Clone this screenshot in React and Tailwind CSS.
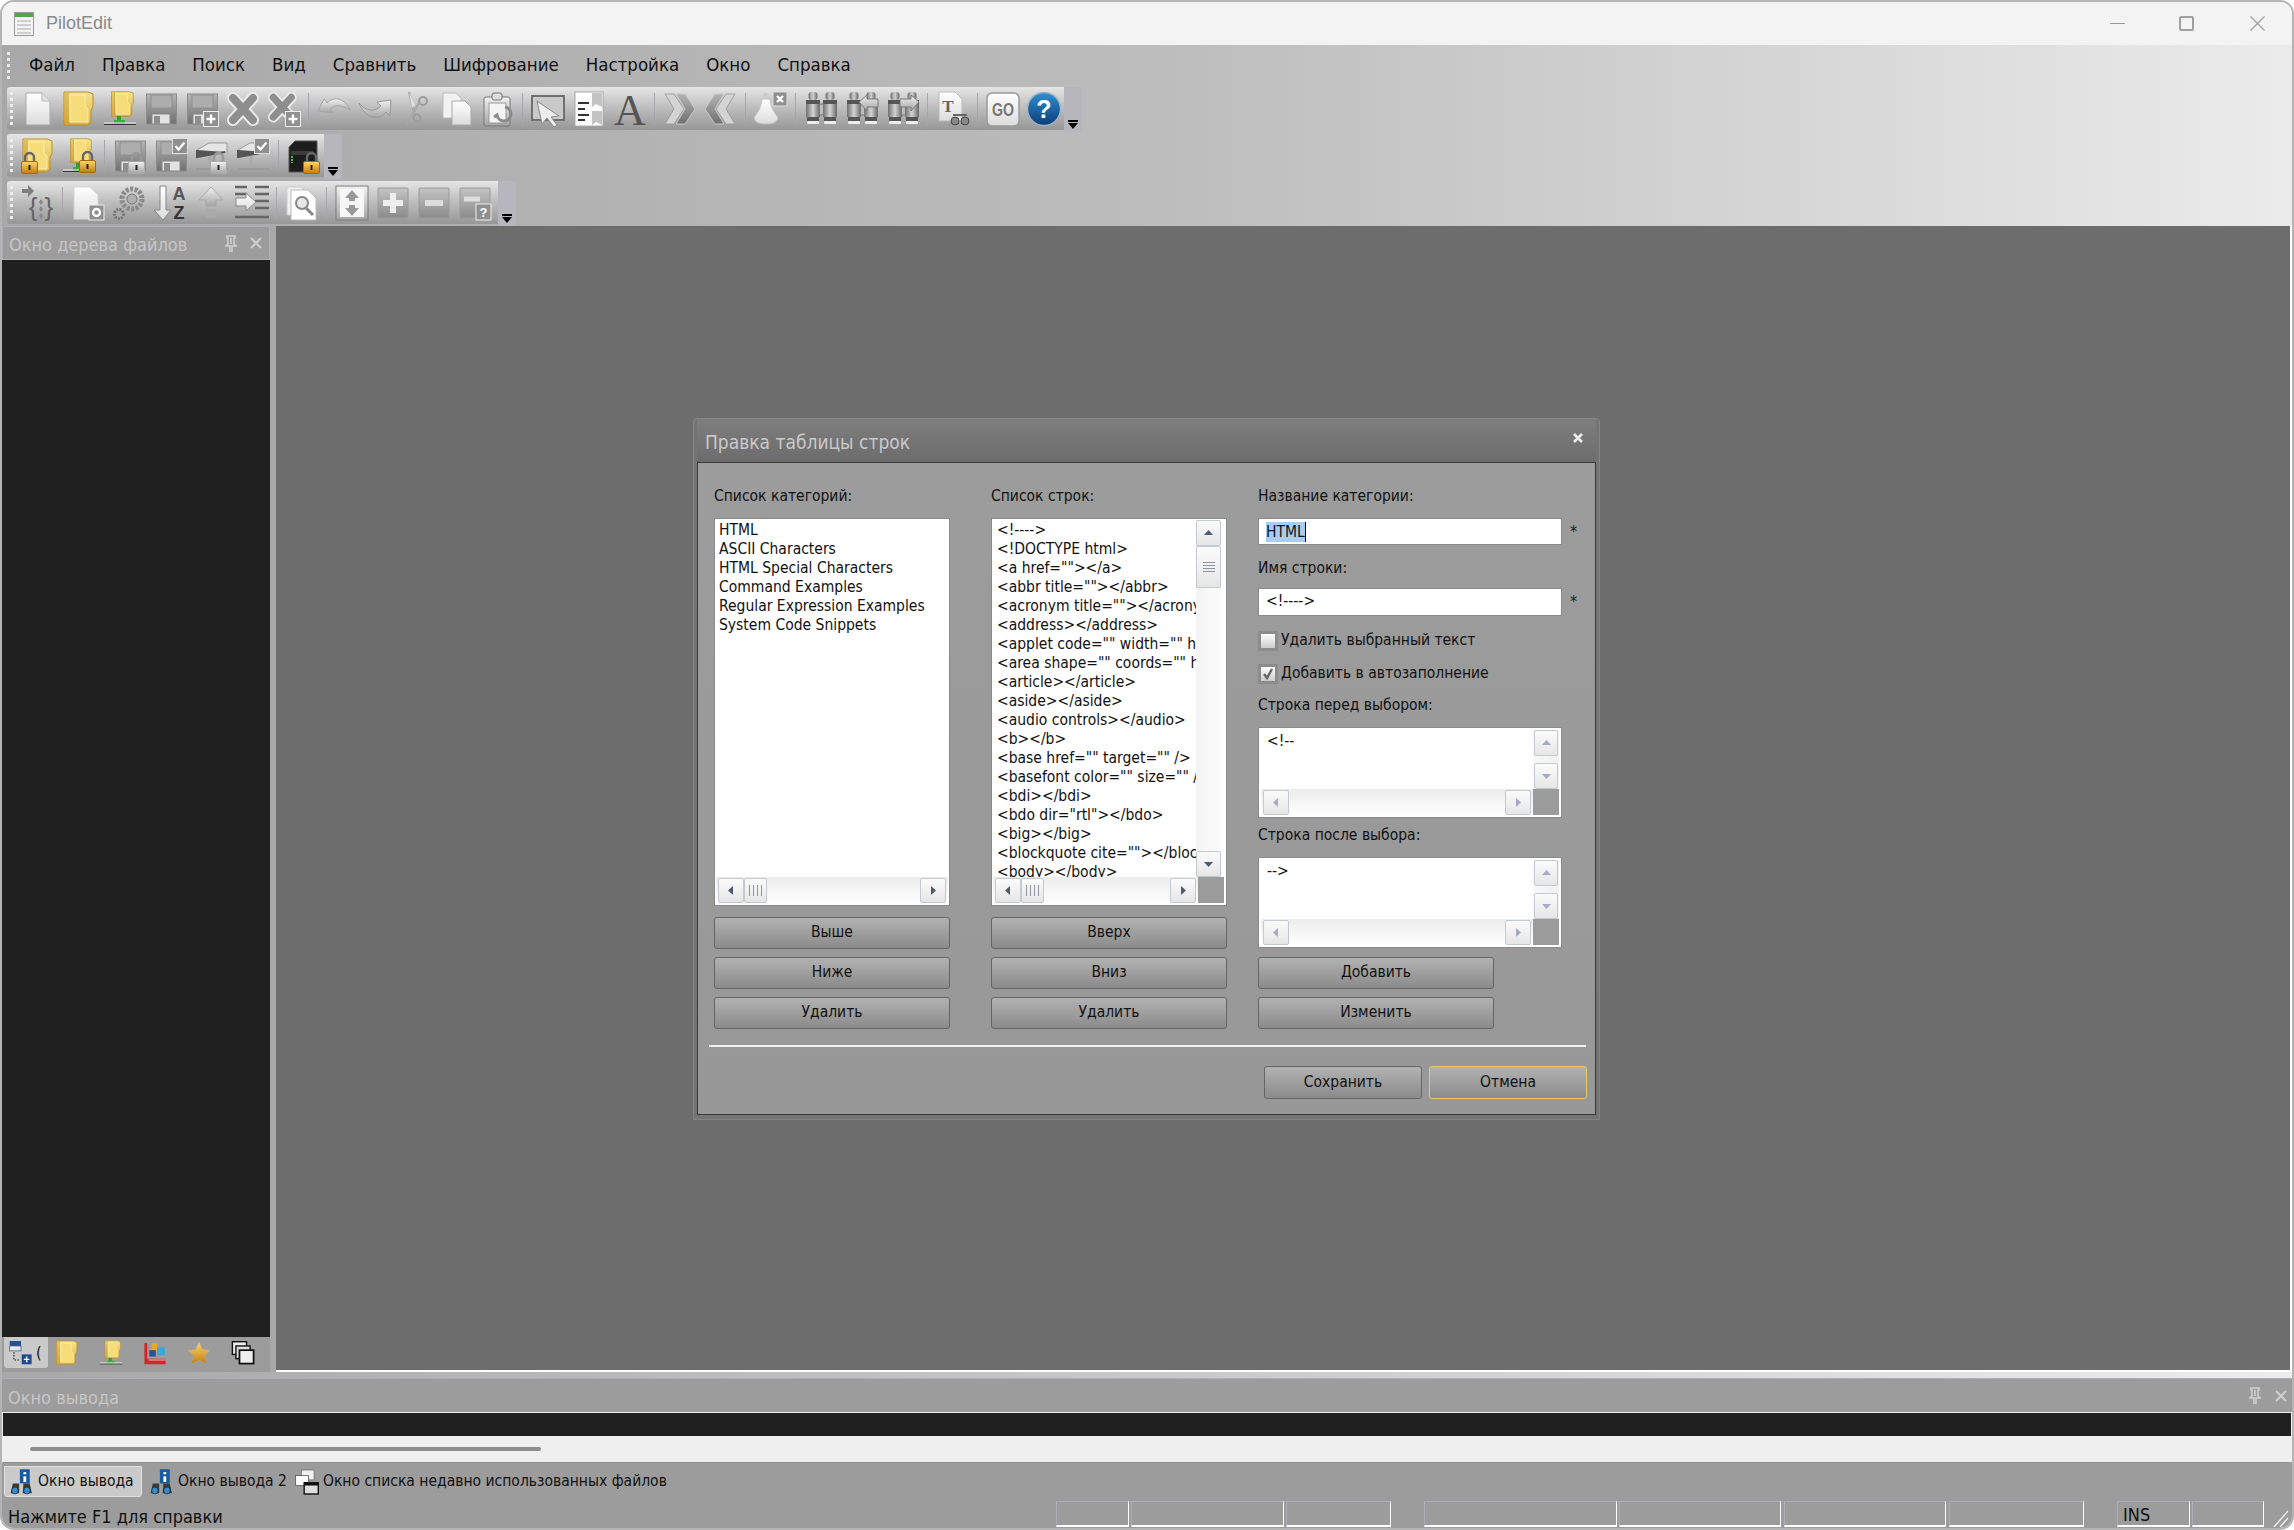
import React from 'react';

const categories = ['HTML', 'ASCII Characters', 'HTML Special Characters', 'Command Examples', 'Regular Expression Examples', 'System Code Snippets'];

const strings = [
  '<!---->', '<!DOCTYPE html>', '<a href=""></a>', '<abbr title=""></abbr>', '<acronym title=""></acronym>',
  '<address></address>', '<applet code="" width="" height=""></applet>', '<area shape="" coords="" href="" />',
  '<article></article>', '<aside></aside>', '<audio controls></audio>', '<b></b>', '<base href="" target="" />',
  '<basefont color="" size="" />', '<bdi></bdi>', '<bdo dir="rtl"></bdo>', '<big></big>',
  '<blockquote cite=""></blockquote>', '<body></body>',
];

const menu = ['Файл', 'Правка', 'Поиск', 'Вид', 'Сравнить', 'Шифрование', 'Настройка', 'Окно', 'Справка'];

// --- icons ---
const Icon = ({ children, w = 34, h = 36 }) => (
  <svg width={w} height={h} viewBox="0 0 34 36" className="block shrink-0">{children}</svg>
);

const Defs = () => (
  <svg width="0" height="0" className="block h-0 w-0">
    <defs>
      <linearGradient id="gPage" x1="0" y1="0" x2="0" y2="1"><stop offset="0" stopColor="#fff" /><stop offset="1" stopColor="#dcdcdc" /></linearGradient>
      <linearGradient id="gFold" x1="0" y1="0" x2="0" y2="1"><stop offset="0" stopColor="#f8e48e" /><stop offset="1" stopColor="#dcb044" /></linearGradient>
      <linearGradient id="gDark" x1="0" y1="0" x2="0" y2="1"><stop offset="0" stopColor="#b4b4b4" /><stop offset="1" stopColor="#707070" /></linearGradient>
      <linearGradient id="gMid" x1="0" y1="0" x2="0" y2="1"><stop offset="0" stopColor="#c4c4c4" /><stop offset="1" stopColor="#8a8a8a" /></linearGradient>
      <linearGradient id="gSilver" x1="0" y1="0" x2="0" y2="1"><stop offset="0" stopColor="#f2f2f2" /><stop offset="1" stopColor="#a4a4a4" /></linearGradient>
      <linearGradient id="gGold" x1="0" y1="0" x2="0" y2="1"><stop offset="0" stopColor="#ffd768" /><stop offset="1" stopColor="#c27c12" /></linearGradient>
      <linearGradient id="gBlue" x1="0" y1="0" x2="0" y2="1"><stop offset="0" stopColor="#2f8fd2" /><stop offset="1" stopColor="#0a3d78" /></linearGradient>
      <linearGradient id="gCyl" x1="0" y1="0" x2="1" y2="0"><stop offset="0" stopColor="#6e6e6e" /><stop offset="0.5" stopColor="#d4d4d4" /><stop offset="1" stopColor="#666" /></linearGradient>
    </defs>
  </svg>
);

const Plus = ({ x = 18, y = 20 }) => (
  <g transform={`translate(${x} ${y})`}>
    <rect x="0.5" y="0.5" width="15" height="15" fill="#8f8f8f" stroke="#eee" />
    <path d="M8 3.5v9M3.5 8h9" stroke="#fff" strokeWidth="2.4" />
  </g>
);

const Check = ({ x = 18, y = 0 }) => (
  <g transform={`translate(${x} ${y})`}>
    <rect x="0.5" y="0.5" width="15" height="15" fill="#8f8f8f" stroke="#ddd" />
    <path d="M3.5 8l3 3.5 6-7" stroke="#fff" strokeWidth="2.2" fill="none" />
  </g>
);

const Lock = ({ x = 15, y = 13, gold = true }) => (
  <g transform={`translate(${x} ${y})`}>
    <path d="M4 11V6.5a4.5 4.5 0 0 1 9 0V11" fill="none" stroke={gold ? '#666' : '#999'} strokeWidth="2.4" />
    <rect x="0.5" y="10.5" width="16" height="12" rx="1.5" fill={gold ? 'url(#gGold)' : 'url(#gSilver)'} stroke={gold ? '#a46a10' : '#aaa'} />
    <rect x="7.5" y="14" width="2" height="5" fill="#222" />
  </g>
);

const PageShape = ({ dx = 0, dy = 0 }) => (
  <g transform={`translate(${dx} ${dy})`}>
    <path d="M5 2h16l8 8v24H5z" fill="url(#gPage)" stroke="#a9a9a9" />
    <path d="M21 2v8h8" fill="#e4e4e4" stroke="#b5b5b5" />
  </g>
);

const FolderShape = ({ dx = 0, dy = 0, s = 1 }) => (
  <g transform={`translate(${dx} ${dy}) scale(${s})`}>
    <path d="M2 1h24l5 2v13l-2 3v12l-3 3H2z" fill="url(#gFold)" stroke="#b88e2c" />
    <path d="M8 4h15v11l3 3v13H8z" fill="#f6dd7a" stroke="#fbeeb0" />
    <path d="M4 2v31M6 2v31" stroke="#c99b30" />
  </g>
);

const NetBase = () => (
  <>
    <path d="M16 25v6" stroke="#2f9f2f" strokeWidth="4" />
    <rect x="11" y="29" width="11" height="4" fill="#35b135" />
    <path d="M1 33.5h32" stroke="#333" strokeWidth="1.2" />
    <path d="M1 32h32" stroke="#eee" strokeWidth="1.2" />
  </>
);

const FloppyShape = () => (
  <>
    <rect x="2.5" y="3" width="30" height="30" fill="url(#gDark)" stroke="#8d8d8d" />
    <rect x="7" y="4" width="21" height="13" fill="#adadad" stroke="#8f8f8f" />
    <rect x="8" y="23" width="18" height="10" fill="#e2e2e2" stroke="#888" />
    <rect x="10" y="25" width="6" height="8" fill="#8d8d8d" />
  </>
);

const XShape = ({ s = 1 }) => (
  <g transform={`scale(${s})`}>
    <path d="M7 7L27 29M27 7L7 29" stroke="#ececec" strokeWidth="12" strokeLinecap="round" />
    <path d="M7 7L27 29M27 7L7 29" stroke="#8e8e8e" strokeWidth="8" strokeLinecap="round" />
  </g>
);

const DriveShape = () => (
  <>
    <path d="M2 12l12-7h18v9L4 18z" fill="#e6e6e6" stroke="#999" />
    <path d="M2 12v7l28-5" fill="#555" stroke="#555" strokeWidth="2" />
    <path d="M15 18v11" stroke="#aaa" strokeWidth="3" />
    <path d="M1 31h32" stroke="#9a9a9a" strokeWidth="2" />
  </>
);

const Tube = ({ x }) => (
  <g transform={`translate(${x} 0)`}>
    <rect x="2.5" y="1" width="9" height="8" rx="3" fill="url(#gCyl)" />
    <rect x="0" y="9" width="14" height="4" fill="#555" />
    <rect x="0" y="13" width="14" height="13" fill="url(#gCyl)" />
    <rect x="1" y="26" width="12" height="4" fill="#555" />
    <rect x="1" y="30" width="12" height="3" rx="1" fill="#ededed" />
  </g>
);

const Binoculars = () => (
  <>
    <Tube x={2} />
    <Tube x={19} />
    <rect x="15.5" y="13" width="4" height="11" fill="#bdbdbd" stroke="#777" />
  </>
);

const icons = {
  page: <PageShape />,
  folder: <FolderShape />,
  netFolder: (<><FolderShape dx={7} dy={0} s={0.75} /><NetBase /></>),
  save: <FloppyShape />,
  saveAs: (<><FloppyShape /><Plus /></>),
  close: <XShape />,
  closeAll: (<><XShape s={0.9} /><Plus /></>),
  undo: <path d="M1 20L7 8l3 4C18 4 28 8 33 19c-7-5-14-6-20-1l3 4z" fill="url(#gSilver)" stroke="#a4a4a4" />,
  redo: <path d="M1 12c7 9 16 9 22 3l-4-4 14-2-1 16-4-4C21 31 7 27 1 12z" fill="url(#gSilver)" stroke="#999" />,
  cut: (
    <>
      <path d="M10 1l5 20M8 33l12-21" stroke="#a8a8a8" strokeWidth="2.5" />
      <path d="M10 1l3 16 3-3z" fill="#e2e2e2" />
      <circle cx="24" cy="10" r="4" fill="none" stroke="#9c9c9c" strokeWidth="2" />
      <circle cx="18" cy="27" r="3.5" fill="none" stroke="#9c9c9c" strokeWidth="2" />
    </>
  ),
  copy: (
    <>
      <path d="M3 2h13l5 5v20H3z" fill="#f2f2f2" stroke="#bbb" />
      <path d="M12 10h13l6 6v18H12z" fill="url(#gPage)" stroke="#aaa" />
    </>
  ),
  paste: (
    <>
      <rect x="3" y="6" width="26" height="29" rx="2" fill="url(#gSilver)" stroke="#777" />
      <rect x="11" y="2" width="10" height="7" rx="2" fill="#ddd" stroke="#777" />
      <rect x="8" y="12" width="17" height="20" fill="#f4f4f4" stroke="#999" />
      <path d="M24 16a7 7 0 1 1-8 8l-3 2" fill="none" stroke="#8a8a8a" strokeWidth="3" />
    </>
  ),
  select: (
    <>
      <rect x="1" y="5" width="32" height="24" fill="#c9c9c9" stroke="#707070" strokeWidth="2" />
      <path d="M6 10l22 15-8 1 6 8-3 2-7-9-5 6z" fill="#eee" stroke="#888" />
    </>
  ),
  lines: (
    <>
      <rect x="3" y="1" width="28" height="34" fill="#fff" stroke="#aaa" />
      <path d="M20 2h10v14l-6-3-4 3zM20 20h10v14l-6-3-4 3z" fill="#c4c4c4" />
      <path d="M6 12h11M6 18h7M6 24h11M6 29h7" stroke="#333" strokeWidth="2" />
    </>
  ),
  font: <text x="17" y="34" textAnchor="middle" fontFamily="Liberation Serif" fontSize="44" fill="#555">A</text>,
  next: (
    <>
      <path d="M2 3l9 15-9 15h9l10-15L11 3z" fill="#d4d4d4" stroke="#a0a0a0" />
      <path d="M13 3l9 15-9 15h9l10-15L22 3z" fill="url(#gDark)" stroke="#c8c8c8" />
    </>
  ),
  prev: (
    <>
      <path d="M20 3l-9 15 9 15h-9L1 18 11 3z" fill="url(#gDark)" stroke="#c8c8c8" />
      <path d="M31 3l-9 15 9 15h-9L12 18 22 3z" fill="#d4d4d4" stroke="#a0a0a0" />
    </>
  ),
  bell: (
    <>
      <circle cx="12" cy="5" r="3" fill="#ccc" />
      <path d="M8 8h8c1 8 3 12 7 17 2 3 0 8-11 8S-1 28 1 25c4-5 6-9 7-17z" fill="url(#gPage)" stroke="#c2c2c2" />
      <rect x="19" y="1" width="14" height="14" fill="#8f8f8f" stroke="#ddd" />
      <path d="M23 5l6 6M29 5l-6 6" stroke="#fff" strokeWidth="2.4" />
    </>
  ),
  find: <Binoculars />,
  findPrev: (
    <>
      <Binoculars />
      <path d="M14 11l8-7v4h11v8H22v4z" fill="url(#gSilver)" stroke="#777" />
    </>
  ),
  findNext: (
    <>
      <Binoculars />
      <path d="M33 11l-8-7v4H14v8h11v4z" fill="url(#gSilver)" stroke="#777" />
    </>
  ),
  findFile: (
    <>
      <path d="M3 1h16l7 7v22H3z" fill="url(#gPage)" stroke="#bbb" />
      <text x="12" y="21" textAnchor="middle" fontFamily="Liberation Serif" fontWeight="700" fontSize="17" fill="#666">T</text>
      <circle cx="19" cy="30" r="4" fill="#888" stroke="#444" />
      <circle cx="29" cy="30" r="4" fill="#888" stroke="#444" />
      <path d="M17 24h14" stroke="#666" strokeWidth="2" />
    </>
  ),
  go: (
    <>
      <rect x="1" y="2" width="32" height="33" rx="5" fill="url(#gPage)" stroke="#999" strokeWidth="1.5" />
      <text x="17" y="25" textAnchor="middle" fontFamily="Liberation Sans" fontWeight="700" fontSize="18" textLength="22" lengthAdjust="spacingAndGlyphs" fill="#777">GO</text>
    </>
  ),
  help: (
    <>
      <circle cx="17" cy="18" r="16.5" fill="url(#gBlue)" stroke="#9fb2c4" strokeWidth="1.5" />
      <text x="17" y="27" textAnchor="middle" fontFamily="Liberation Sans" fontWeight="700" fontSize="25" fill="#fff">?</text>
    </>
  ),
  folderLock: (<><FolderShape /><Lock x={0} y={13} /></>),
  netFolderLock: (<><FolderShape dx={7} dy={0} s={0.72} /><NetBase /><Lock x={17} y={12} /></>),
  saveLock: (<><FloppyShape /><Lock gold={false} /></>),
  saveCheck: (<><FloppyShape /><Check /></>),
  driveLock: (<><DriveShape /><Lock gold={false} /></>),
  driveCheck: (<><DriveShape /><Check /></>),
  deviceLock: (
    <>
      <path d="M2 9l6-6h22v25l-5 6H2z" fill="#1d1d1d" stroke="#555" />
      <path d="M4 13h22v4H4z" fill="#3c3c3c" />
      <path d="M5 18v7" stroke="#3fc13f" strokeWidth="2" strokeDasharray="2 1" />
      <Lock x={16} y={13} />
    </>
  ),
  braces: (
    <>
      <path d="M1 4h6V0l6 6-6 6V8H1z" fill="#7f7f7f" />
      <text x="20" y="31" textAnchor="middle" fontFamily="Liberation Sans" fontSize="26" fill="#666">{'{ }'}</text>
      <path d="M20 14l2 3-2 3-2-3zM20 21l2 3-2 3-2-3zM20 28l2 3-2 3-2-3z" fill="#888" />
    </>
  ),
  pageGear: (
    <>
      <path d="M3 2h16l8 8v24H3z" fill="url(#gPage)" stroke="#d4d4d4" />
      <rect x="18" y="20" width="15" height="15" fill="#8f8f8f" stroke="#eee" />
      <circle cx="25.5" cy="27.5" r="3.5" fill="none" stroke="#fff" strokeWidth="2.4" />
    </>
  ),
  gears: (
    <>
      <circle cx="20" cy="14" r="10" fill="none" stroke="#8a8a8a" strokeWidth="5" strokeDasharray="3 1.5" />
      <circle cx="20" cy="14" r="5" fill="#b0b0b0" stroke="#777" />
      <circle cx="7" cy="29" r="4.5" fill="#aaa" stroke="#7a7a7a" strokeWidth="3" strokeDasharray="2 1" />
    </>
  ),
  sort: (
    <>
      <path d="M7 1h6v24h5L10 35 1 25h6z" fill="url(#gPage)" stroke="#888" />
      <text x="26" y="15" textAnchor="middle" fontFamily="Liberation Sans" fontWeight="700" fontSize="18" fill="#555">A</text>
      <text x="26" y="34" textAnchor="middle" fontFamily="Liberation Sans" fontWeight="700" fontSize="18" fill="#333">Z</text>
    </>
  ),
  up: (
    <>
      <path d="M17 2l12 13h-7v6H12v-6H5z" fill="url(#gSilver)" stroke="#a9a9a9" />
      <path d="M12 24h10v3H12zM12 30h10v3H12z" fill="#a9a9a9" />
    </>
  ),
  indent: (
    <>
      <path d="M0 2h12M20 2h14M0 9h12M20 9h14M20 16h14M20 23h14M0 32h34" stroke="#666" strokeWidth="2.4" />
      <path d="M1 13h10V8l10 9-10 9v-5H1z" fill="url(#gPage)" stroke="#888" />
    </>
  ),
  docFind: (
    <>
      <path d="M2 2h14l6 6v22H2z" fill="#f0f0f0" stroke="#ccc" />
      <path d="M6 5h17l8 8v22H6z" fill="#fff" stroke="#bbb" />
      <circle cx="17" cy="18" r="6" fill="#e8e8e8" stroke="#888" strokeWidth="2" />
      <path d="M21 23l7 7" stroke="#888" strokeWidth="3" />
    </>
  ),
  expand: (
    <>
      <rect x="1" y="1" width="32" height="34" fill="url(#gSilver)" stroke="#7d7d7d" />
      <rect x="5" y="4" width="24" height="28" fill="#f7f7f7" />
      <path d="M17 5l7 8h-4v3h-6v-3h-4zM17 31l7-8h-4v-3h-6v3h-4z" fill="#999" />
    </>
  ),
  plus: (
    <>
      <rect x="2" y="3" width="30" height="30" rx="1" fill="url(#gMid)" stroke="#9a9a9a" />
      <path d="M17 8v20M7 18h20" stroke="#eee" strokeWidth="6" />
    </>
  ),
  minus: (
    <>
      <rect x="2" y="3" width="30" height="30" rx="1" fill="url(#gMid)" stroke="#9a9a9a" />
      <path d="M8 18h18" stroke="#ddd" strokeWidth="6" />
    </>
  ),
  helpBox: (
    <>
      <rect x="2" y="3" width="30" height="30" rx="1" fill="url(#gMid)" stroke="#9a9a9a" />
      <path d="M6 14h16" stroke="#ddd" strokeWidth="5" />
      <rect x="18" y="19" width="15" height="16" fill="#8f8f8f" stroke="#eee" />
      <text x="25.5" y="32" textAnchor="middle" fontFamily="Liberation Sans" fontWeight="700" fontSize="13" fill="#fff">?</text>
    </>
  ),
  tree: (
    <>
      <rect x="1" y="1" width="16" height="7" fill="#27508f" />
      <rect x="1" y="8" width="16" height="7" fill="#e8e8e8" stroke="#27508f" />
      <path d="M7 17v11h8" stroke="#111" strokeWidth="1.6" strokeDasharray="2 2" fill="none" />
      <rect x="18" y="20" width="14" height="14" fill="#1f4a90" />
      <path d="M25 23v8M21 27h8" stroke="#fff" strokeWidth="2" />
    </>
  ),
  colors: (
    <>
      <path d="M2 4h4v22h26v8H2z" fill="#d8232a" />
      <path d="M8 28h24" stroke="#f5b5b5" strokeWidth="1.5" />
      <rect x="12" y="4" width="8" height="12" fill="#e8a92a" />
      <rect x="9" y="14" width="9" height="9" fill="#25519a" />
      <rect x="20" y="10" width="11" height="11" fill="#3aa7e0" />
    </>
  ),
  star: <path d="M17 2l5 11 11 1-8 8 3 12-11-6-11 6 3-12-8-8 11-1z" fill="url(#gGold)" stroke="#a9a9a9" strokeDasharray="2 1" />,
  windows: (
    <>
      <rect x="2" y="2" width="20" height="18" fill="#eee" stroke="#111" strokeWidth="2" />
      <rect x="7" y="8" width="20" height="18" fill="#ddd" stroke="#111" strokeWidth="2" />
      <rect x="12" y="14" width="20" height="19" fill="#eee" stroke="#111" strokeWidth="2.5" />
    </>
  ),
  output: (
    <>
      <rect x="14" y="0" width="14" height="20" fill="#155c9e" />
      <rect x="19" y="4" width="4" height="3" fill="#fff" />
      <rect x="19" y="10" width="4" height="8" fill="#fff" />
      <path d="M4 20h9v14H1zM19 20h9l3 14H18z" fill="#3a3a3a" />
      <ellipse cx="7" cy="30" rx="4.5" ry="5" fill="#2f8fd2" stroke="#222" />
      <ellipse cx="24" cy="30" rx="4.5" ry="5" fill="#2f8fd2" stroke="#222" />
    </>
  ),
  recent: (
    <>
      <rect x="9" y="1" width="18" height="14" fill="#f2f2f2" stroke="#666" />
      <rect x="1" y="9" width="18" height="14" fill="#fff" stroke="#444" />
      <rect x="13" y="19" width="20" height="16" fill="#ddd" stroke="#111" strokeWidth="2" />
      <rect x="13" y="19" width="20" height="4" fill="#111" />
    </>
  ),
};

// --- toolbars ---
const Gripper = () => (
  <div className="flex w-[10px] shrink-0 flex-col gap-[3px] pl-[3px]">
    {[0, 1, 2, 3, 4, 5].map(i => <span key={i} className="h-[3px] w-[3px] bg-[#eeeeee]" />)}
  </div>
);

const Sep = ({ wide }) => (
  <div className={`flex h-[32px] shrink-0 justify-center ${wide ? 'w-[10px]' : 'w-[9px]'}`}>
    <span className="w-px bg-[#a6a6ac]" />
  </div>
);

const ToolIcon = ({ name }) => (
  <div className="flex w-[41px] shrink-0 justify-center">
    <Icon>{icons[name]}</Icon>
  </div>
);

const Toolbar = ({ items, className, wide, endPad = '' }) => (
  <div className={`flex items-start ${className}`}>
    <div className={`flex h-[43px] items-center rounded-l-[3px] bg-gradient-to-b from-[#e6e6e6] via-[#bcbcbc] to-[#979797] ${endPad}`}>
      <Gripper />
      {items.map((name, i) => (name === '|' ? <Sep key={i} wide={wide} /> : <ToolIcon key={i} name={name} />))}
    </div>
    <div className="flex h-[45px] w-[18px] flex-col items-center justify-end rounded-r-[3px] bg-[#b6b6bc] pb-[3px]">
      <span className="mb-px h-[2px] w-[10px] bg-black" />
      <span className="h-0 w-0 border-x-[5px] border-t-[6px] border-x-transparent border-t-black" />
    </div>
  </div>
);

const toolbar1 = ['page', 'folder', 'netFolder', 'save', 'saveAs', 'close', 'closeAll', '|', 'undo', 'redo', 'cut', 'copy', 'paste', '|', 'select', 'lines', 'font', '|', 'next', 'prev', '|', 'bell', '|', 'find', 'findPrev', 'findNext', '|', 'findFile', '|', 'go', 'help'];
const toolbar2 = ['folderLock', 'netFolderLock', '|', 'saveLock', 'saveCheck', 'driveLock', 'driveCheck', '|', 'deviceLock'];
const toolbar3 = ['braces', '|', 'pageGear', 'gears', 'sort', 'up', 'indent', '|', 'docFind', '|', 'expand', 'plus', 'minus', 'helpBox'];

// --- small window parts ---
const Pin = () => (
  <svg width="12" height="17" viewBox="0 0 12 17" className="block">
    <path d="M2 1h8v2H9v6l2 2H1l2-2V3H2zM5 11h2v6H5zM6 3v6" fill="none" stroke="#cfcfcf" strokeWidth="1.6" />
  </svg>
);

const PanelClose = () => (
  <svg width="12" height="12" viewBox="0 0 12 12" className="block">
    <path d="M1 1l10 10M11 1L1 11" stroke="#cfcfcf" strokeWidth="2" />
  </svg>
);

const ArrowBtn = ({ dir, className = '', light }) => {
  const color = light ? '#a4aac8' : '#4e5a74';
  const arrows = {
    up: <path d="M1 7l4.5-5L10 7z" fill={color} />,
    down: <path d="M1 3l4.5 5L10 3z" fill={color} />,
    left: <path d="M7 1L2 5.5 7 10z" fill={color} />,
    right: <path d="M3 1l5 4.5L3 10z" fill={color} />,
  };
  return (
    <div className={`flex shrink-0 items-center justify-center rounded-[2px] border border-[#c4c8d0] bg-gradient-to-b from-[#fbfbfb] to-[#e6e6e6] ${className}`}>
      <svg width="11" height="11" viewBox="0 0 11 11" className="block">{arrows[dir]}</svg>
    </div>
  );
};

const Thumb = ({ vertical, className = '' }) => (
  <div className={`flex shrink-0 items-center justify-center rounded-[2px] border border-[#c4c8d0] bg-gradient-to-b from-[#fbfbfb] to-[#e6e6e6] ${className}`}>
    <div className={vertical ? 'flex flex-col gap-[2px]' : 'flex gap-[3px]'}>
      {[0, 1, 2, 3].map(i => (
        <span key={i} className={vertical ? 'h-px w-[12px] bg-[#8d93a3]' : 'h-[11px] w-px bg-[#8d93a3]'} />
      ))}
    </div>
  </div>
);

const HScroll = ({ thumb, light, corner }) => (
  <div className="flex h-[26px] shrink-0">
    <div className="flex min-w-0 flex-1 items-center bg-gradient-to-b from-[#ececec] to-white px-[2px]">
      <ArrowBtn dir="left" light={light} className="h-[25px] w-[26px]" />
      {thumb && <Thumb className="h-[25px] w-[23px]" />}
      <div className="flex-1" />
      <ArrowBtn dir="right" light={light} className="h-[25px] w-[26px]" />
    </div>
    {corner && <div className="w-[26px] bg-[#9b9b9b]" />}
  </div>
);

const Label = ({ children, className = '' }) => (
  <div className={`h-[19px] text-[15.5px] leading-[19px] text-[#111] ${className}`}>{children}</div>
);

const Button = ({ children, className = '', cancel }) => (
  <button className={`flex items-center justify-center rounded-[3px] border bg-gradient-to-b from-[#b2b2b2] to-[#8b8b8b] text-[15.5px] text-[#111] ${cancel ? 'border-[#eccb55]' : 'border-[#666666]'} ${className}`}>
    {children}
  </button>
);

const TextRow = ({ children }) => (
  <div className="flex h-full items-center">
    <div className="flex h-full w-[304px] items-center border border-[#8a8a8a] bg-white pl-[7px] text-[15.5px] text-[#111]">{children}</div>
    <span className="ml-[8px] text-[16px] text-[#222]">*</span>
  </div>
);

const ScrollText = ({ text }) => (
  <div className="flex h-[91px] w-[304px] flex-col border border-[#8a8a8a] bg-white p-[2px]">
    <div className="flex min-h-0 flex-1">
      <div className="flex-1 pl-[6px] pt-[2px] text-[15.5px] leading-[19px] text-[#111]">{text}</div>
      <div className="flex w-[26px] flex-col justify-between bg-gradient-to-r from-[#f8f8f8] to-[#f0f0f0] px-px">
        <ArrowBtn dir="up" light className="h-[26px]" />
        <ArrowBtn dir="down" light className="h-[26px]" />
      </div>
    </div>
    <HScroll light corner />
  </div>
);

const Check2 = ({ checked, children, className = '' }) => (
  <div className={`flex h-[20px] items-center ${className}`}>
    <div className="flex h-[20px] w-[20px] items-center justify-center bg-[#8c8c8c]">
      <div className="flex h-[14px] w-[14px] items-center justify-center bg-gradient-to-b from-[#ffffff] to-[#cccccc]">
        {checked && (
          <svg width="14" height="14" viewBox="0 0 14 14" className="block">
            <path d="M3 7l3 4 5-9" fill="none" stroke="#666" strokeWidth="2.4" />
          </svg>
        )}
      </div>
    </div>
    <span className="ml-[3px] text-[15.5px] text-[#111]">{children}</span>
  </div>
);

const Dialog = () => (
  <div className="absolute left-[693px] top-[418px] flex h-[702px] w-[907px] flex-col rounded-t-[4px] border border-[#858585] bg-[#747474] px-[3px] pb-[4px]">
    <div className="flex h-[43px] shrink-0 items-center justify-between bg-gradient-to-b from-[#7e7e7e] to-[#6c6c6c] pl-[8px] pr-[12px]">
      <span className="pt-[4px] text-[19px] text-[#c9c9c9]">Правка таблицы строк</span>
      <svg width="12" height="12" viewBox="0 0 12 12" className="mb-[6px] block">
        <path d="M2 2l8 8M10 2l-8 8" stroke="#ececec" strokeWidth="2.6" />
      </svg>
    </div>
    <div className="flex min-h-0 flex-1 flex-col border border-[#3a3a3a] bg-gradient-to-b from-[#9c9c9c] to-[#989898] pt-[24px]">
      <div className="flex pl-[16px]">
        {/* categories */}
        <div className="flex w-[236px] flex-col">
          <Label>Список категорий:</Label>
          <div className="mt-[12px] flex h-[388px] flex-col border border-[#8a8a8a] bg-white">
            <div className="min-h-0 flex-1 pl-[4px] pt-[2px] text-[15.5px] leading-[19px] text-[#111]">
              {categories.map(c => <div key={c}>{c}</div>)}
            </div>
            <div className="px-px pb-[2px]"><HScroll thumb /></div>
          </div>
          <Button className="mt-[11px] h-[32px]">Выше</Button>
          <Button className="mt-[8px] h-[32px]">Ниже</Button>
          <Button className="mt-[8px] h-[32px]">Удалить</Button>
        </div>
        {/* strings */}
        <div className="ml-[41px] flex w-[236px] flex-col">
          <Label>Список строк:</Label>
          <div className="mt-[12px] flex h-[388px] flex-col border border-[#8a8a8a] bg-white">
            <div className="flex min-h-0 flex-1">
              <div className="min-w-0 flex-1 overflow-hidden whitespace-nowrap pl-[5px] pt-[2px] text-[15.5px] leading-[19px] text-[#111]">
                {strings.map(s => <div key={s}>{s}</div>)}
              </div>
              <div className="mr-[5px] mt-px flex w-[25px] shrink-0 flex-col bg-gradient-to-r from-[#f4f4f4] to-[#fbfbfb]">
                <ArrowBtn dir="up" className="h-[26px]" />
                <Thumb vertical className="h-[42px]" />
                <div className="flex-1" />
                <ArrowBtn dir="down" className="h-[26px]" />
              </div>
            </div>
            <div className="pb-[2px] pl-px pr-[2px]"><HScroll thumb corner /></div>
          </div>
          <Button className="mt-[11px] h-[32px]">Вверх</Button>
          <Button className="mt-[8px] h-[32px]">Вниз</Button>
          <Button className="mt-[8px] h-[32px]">Удалить</Button>
        </div>
        {/* editor */}
        <div className="ml-[31px] flex flex-col">
          <Label>Название категории:</Label>
          <div className="mt-[12px] h-[27px]">
            <TextRow>
              <span className="bg-[#a8cdf0] leading-[20px]">HTML</span>
              <span className="h-[20px] w-px bg-black" />
            </TextRow>
          </div>
          <Label className="mt-[14px]">Имя строки:</Label>
          <div className="mt-[10px] h-[28px]"><TextRow>{'<!---->'}</TextRow></div>
          <Check2 className="mt-[15px]">Удалить выбранный текст</Check2>
          <Check2 checked className="mt-[13px]">Добавить в автозаполнение</Check2>
          <Label className="mt-[12px]">Строка перед выбором:</Label>
          <div className="mt-[12px]"><ScrollText text="<!--" /></div>
          <Label className="mt-[8px]">Строка после выбора:</Label>
          <div className="mt-[12px]"><ScrollText text="-->" /></div>
          <Button className="mt-[9px] h-[32px] w-[236px]">Добавить</Button>
          <Button className="mt-[8px] h-[32px] w-[236px]">Изменить</Button>
        </div>
      </div>
      <div className="ml-[11px] mr-[9px] mt-[16px] h-[2px] bg-[#f0f0f0]" />
      <div className="mr-[8px] mt-[19px] flex justify-end gap-[7px]">
        <Button className="h-[33px] w-[158px]">Сохранить</Button>
        <Button cancel className="h-[33px] w-[158px]">Отмена</Button>
      </div>
    </div>
  </div>
);

const StatusPane = ({ w, children, className = '' }) => (
  <div
    className={`flex h-[26px] shrink-0 items-center border border-b-2 border-b-white border-l-[#aeaeb8] border-r-white border-t-[#aeaeb8] pl-[5px] pt-px text-[18px] text-[#111] ${className}`}
    style={{ width: w }}
  >
    {children}
  </div>
);

const SideTab = ({ name, active, mark }) => (
  <div className={`flex h-[31px] w-[44px] shrink-0 items-center ${active ? 'rounded-b-[3px] bg-[#cacaca] pl-[5px]' : 'justify-center pr-[6px]'}`}>
    <Icon w={24} h={26}>{icons[name]}</Icon>
    {mark && <span className="ml-[3px] text-[16px] text-[#111]">{mark}</span>}
  </div>
);

const OutputTab = ({ icon, active, children }) => (
  <div className={`flex h-[31px] items-center gap-[4px] ${active ? 'w-[138px] rounded-b-[3px] border border-[#e0e0e0] bg-[#cacaca] pl-[5px]' : 'ml-[8px]'}`}>
    <Icon w={24} h={26}>{icons[icon]}</Icon>
    <span className="whitespace-nowrap text-[15.5px] text-[#111]">{children}</span>
  </div>
);

export default function App() {
  return (
    <div className="relative h-[1530px] w-[2294px] overflow-hidden bg-white font-['DejaVu_Sans_Condensed','Liberation_Sans',sans-serif]">
      <Defs />
      <div className="flex h-[1530px] w-[2294px] flex-col overflow-hidden rounded-[14px] border-2 border-[#b4b4b4]">
        {/* title bar */}
        <div className="flex h-[43px] shrink-0 items-center bg-[#f3f3f3] pl-[12px]">
          <svg width="20" height="24" viewBox="0 0 20 24" className="block">
            <rect x="0.5" y="0.5" width="19" height="23" fill="#f4f4f4" stroke="#9a9a9a" />
            <rect x="1" y="1" width="18" height="4" fill="#5f9c5a" />
            <path d="M3 9h14M3 13h14M3 17h14M3 21h14" stroke="#a8a8a8" />
          </svg>
          <span className="ml-[12px] font-['Liberation_Sans'] text-[18px] text-[#8a8a8a]">PilotEdit</span>
          <div className="ml-auto flex items-center pr-[27px]">
            <span className="mr-[54px] h-px w-[15px] bg-[#9a9a9a]" />
            <span className="mr-[56px] h-[15px] w-[15px] rounded-[2px] border-2 border-[#a0a0a0]" />
            <svg width="15" height="15" viewBox="0 0 15 15" className="block">
              <path d="M0.5 0.5l14 14M14.5 0.5l-14 14" stroke="#a0a0a0" strokeWidth="1.2" />
            </svg>
          </div>
        </div>

        {/* menu and toolbars */}
        <div className="h-[181px] shrink-0 bg-gradient-to-r from-[#a8a8a8] via-[#bcbcbc] via-50% to-[#ebebeb] pl-[5px]">
          <div className="flex h-[42px] items-center pb-[2px]">
            <div className="flex w-[6px] flex-col gap-[3px]">
              {[0, 1, 2, 3, 4].map(i => <span key={i} className="h-[3px] w-[3px] bg-[#e8e8e8]" />)}
            </div>
            <div className="ml-[16px] flex gap-[27px] text-[18.5px] text-[#111]">
              {menu.map(m => <span key={m}>{m}</span>)}
            </div>
          </div>
          <Toolbar items={toolbar1} className="h-[47px]" />
          <Toolbar items={toolbar2} wide className="h-[47px]" />
          <Toolbar items={toolbar3} endPad="pr-[3px]" className="h-[45px]" />
        </div>

        {/* workspace */}
        <div className="flex min-h-0 flex-1">
          <div className="flex w-[268px] shrink-0 flex-col bg-[#9c9c9c]">
            <div className="flex h-[34px] shrink-0 items-center border border-[#aeaeb8] pl-[6px] pr-[7px]">
              <span className="pt-[3px] text-[18px] text-[#c6c6c6]">Окно дерева файлов</span>
              <div className="ml-auto flex items-center gap-[13px]"><Pin /><PanelClose /></div>
            </div>
            <div className="min-h-0 flex-1 bg-[#202020]" />
            <div className="flex h-[35px] shrink-0 items-start pl-[2px]">
              <SideTab name="tree" active mark="(" />
              <SideTab name="folder" />
              <SideTab name="netFolder" />
              <SideTab name="colors" />
              <SideTab name="star" />
              <SideTab name="windows" />
            </div>
          </div>
          <div className="w-[6px] shrink-0 bg-[#a8a8a8]" />
          <div className="min-w-0 flex-1 border-b-2 border-r-2 border-white bg-[#6d6d6d]" />
        </div>
        <div className="h-[6px] shrink-0 bg-gradient-to-r from-[#a8a8a8] via-[#c8c8c8] to-[#ececec]" />

        {/* output dock */}
        <div className="flex h-[150px] shrink-0 flex-col bg-[#9c9c9c]">
          <div className="flex h-[34px] shrink-0 items-center border-t border-[#aeaeb8] pl-[6px] pr-[5px]">
            <span className="pt-[3px] text-[18px] text-[#c6c6c6]">Окно вывода</span>
            <div className="ml-auto flex items-center gap-[14px]"><Pin /><PanelClose /></div>
          </div>
          <div className="flex h-[51px] shrink-0 flex-col border border-[#eeeeee] border-b-[#8f8f8f]">
            <div className="h-[23px] bg-[#202020]" />
            <div className="flex flex-1 items-center bg-[#efefef] pl-[27px]">
              <span className="h-[4px] w-[511px] rounded-full bg-[#8e8e8e]" />
            </div>
          </div>
          <div className="mt-[3px] flex h-[31px] shrink-0 items-start pl-[2px]">
            <OutputTab icon="output" active>Окно вывода</OutputTab>
            <OutputTab icon="output">Окно вывода 2</OutputTab>
            <OutputTab icon="recent">Окно списка недавно использованных файлов</OutputTab>
          </div>
          <div className="flex min-h-0 flex-1 items-end pb-px pl-[6px]">
            <span className="h-[26px] text-[18px] leading-[32px] text-[#111]">Нажмите F1 для справки</span>
            <div className="ml-auto flex items-center pr-[2px]">
              <StatusPane w={73} />
              <StatusPane w={153} className="ml-[2px]" />
              <StatusPane w={105} className="ml-[2px]" />
              <StatusPane w={193} className="ml-[33px]" />
              <StatusPane w={162} className="ml-[2px]" />
              <StatusPane w={162} className="ml-[3px]" />
              <StatusPane w={135} className="ml-[3px]" />
              <StatusPane w={73} className="ml-[33px]">INS</StatusPane>
              <StatusPane w={72} className="ml-[2px]" />
              <svg width="26" height="26" viewBox="0 0 26 26" className="block">
                <path d="M10 26L24 10M16 26l8-9" stroke="#eee" strokeWidth="1.4" />
              </svg>
            </div>
          </div>
        </div>
      </div>
      <Dialog />
    </div>
  );
}
